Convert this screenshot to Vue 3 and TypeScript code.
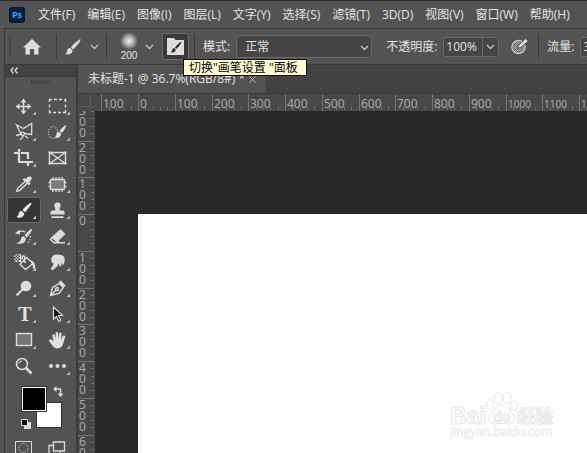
<script setup lang="ts">
import { computed, onBeforeUnmount, onMounted, ref } from 'vue'

const menus = ['文件(F)', '编辑(E)', '图像(I)', '图层(L)', '文字(Y)', '选择(S)', '滤镜(T)', '3D(D)', '视图(V)', '窗口(W)', '帮助(H)']

interface Tool { id: string; name: string; flyout: boolean }
const tools: Tool[] = [
  { id: 'move', name: '移动工具', flyout: true },
  { id: 'marquee', name: '矩形选框工具', flyout: true },
  { id: 'lasso', name: '多边形套索工具', flyout: true },
  { id: 'quick', name: '快速选择工具', flyout: true },
  { id: 'crop', name: '裁剪工具', flyout: true },
  { id: 'frame', name: '图框工具', flyout: false },
  { id: 'eyedropper', name: '吸管工具', flyout: true },
  { id: 'patch', name: '修补工具', flyout: true },
  { id: 'brush', name: '画笔工具', flyout: true },
  { id: 'stamp', name: '仿制图章工具', flyout: true },
  { id: 'history', name: '历史记录画笔工具', flyout: true },
  { id: 'eraser', name: '橡皮擦工具', flyout: true },
  { id: 'bucket', name: '油漆桶工具', flyout: true },
  { id: 'smudge', name: '涂抹工具', flyout: true },
  { id: 'dodge', name: '减淡工具', flyout: true },
  { id: 'pen', name: '钢笔工具', flyout: true },
  { id: 'type', name: '横排文字工具', flyout: true },
  { id: 'path', name: '路径选择工具', flyout: true },
  { id: 'rect', name: '矩形工具', flyout: true },
  { id: 'hand', name: '抓手工具', flyout: true },
  { id: 'zoom', name: '缩放工具', flyout: false },
  { id: 'more', name: '编辑工具栏', flyout: true },
]
const active = ref('brush')
const mode = ref('正常')
const opacity = ref('100%')
const flow = ref('35%')

// Ruler marks: one labelled tick per 100 document pixels at 36.7% zoom.
const STEP = 36.75
interface Mark { pos: number; label: string; minor: number[] }
function marks(zeroAt: number, from: number, length: number): Mark[] {
  const list: Mark[] = []
  for (let i = from; zeroAt + i * STEP < length; i++) {
    const start = zeroAt + i * STEP
    list.push({
      pos: Math.round(start),
      label: String(Math.abs(i * 100)),
      minor: [1, 2, 3, 4].map((k) => Math.round(start + (k * STEP) / 5)),
    })
  }
  return list
}
const size = ref({ w: window.innerWidth, h: window.innerHeight })
function measure() {
  size.value = { w: window.innerWidth, h: window.innerHeight }
}
onMounted(() => window.addEventListener('resize', measure))
onBeforeUnmount(() => window.removeEventListener('resize', measure))
const across = computed(() => marks(43, -1, size.value.w - 95))
const down = computed(() => marks(103, -3, size.value.h - 111))

// Digits of a vertical label that fall inside the ruler.
function digits(m: Mark) {
  return m.label
    .split('')
    .map((d, i) => ({ d, y: m.pos + 11 * (i + 1) }))
    .filter((g) => g.y > 0 && g.y - 9 < size.value.h - 111)
}
</script>

<template>
  <div class="app">
    <header class="menubar">
      <span class="logo">Ps</span>
      <nav class="menus">
        <button v-for="m in menus" :key="m" type="button">{{ m }}</button>
      </nav>
    </header>

    <div class="frame">
      <section class="options">
        <span class="grip"></span>
        <button type="button" class="home" aria-label="主页">
          <svg width="18" height="16" viewBox="0 0 18 16"><path d="M9 0 18 8.500H15.500V15.500H11V10H7V15.500H2.500V8.500H0Z" fill="#dcdcdc" /></svg>
        </button>
        <span class="sep"></span>
        <button type="button" class="preset" aria-label="画笔预设">
          <svg width="16" height="16" viewBox="0 0 16 16" fill="#dcdcdc"><path d="M15.500.3C14 .3 8.500 5 6 8.300L8.200 10.500C11 8 16 2 15.500.3ZM5.300 9C3.500 8.800 2.300 10 2.200 11.800 2.100 13.500 1.200 14.400.2 15 3 16 7.300 15.300 7.700 11.300Z" /></svg>
          <svg class="chev" width="9" height="6" viewBox="0 0 9 6"><path d="M1 1 4.500 4.500 8 1" /></svg>
        </button>
        <span class="sep"></span>
        <button type="button" class="tip" aria-label="画笔大小">
          <span class="tip-face"><span class="dot"></span><span class="tip-size">200</span></span>
          <svg class="chev" width="9" height="6" viewBox="0 0 9 6"><path d="M1 1 4.500 4.500 8 1" /></svg>
        </button>
        <span class="hint-anchor">
          <button type="button" class="panel-toggle" aria-label="切换画笔设置面板">
            <svg width="17" height="17" viewBox="0 0 17 17"><path d="M0 0H7L8.500 2H17V17H0Z" fill="#dedede" /><path d="M14.500 3.500C12.500 4.500 9.500 7.500 8 9.400L9.400 10.800C11.500 9 14.500 5.500 14.500 3.500ZM7.300 10C5.800 10 5.300 11 5.200 12.200 5 13.300 4.200 13.900 3.500 14.200 5.500 15 8.500 14.600 8.800 11.500Z" fill="#303030" /></svg>
          </button>
          <span class="tooltip" role="tooltip">切换"画笔设置 "面板</span>
        </span>
        <span class="sep"></span>
        <label class="lbl" for="mode">模式:</label>
        <span class="select">
          <select id="mode" v-model="mode"><option>正常</option><option>溶解</option></select>
          <svg class="chev" width="9" height="6" viewBox="0 0 9 6"><path d="M1 1 4.500 4.500 8 1" /></svg>
        </span>
        <label class="lbl opacity-lbl" for="opacity">不透明度:</label>
        <span class="field">
          <input id="opacity" v-model="opacity" type="text" />
          <button type="button" aria-label="不透明度滑块"><svg class="chev" width="9" height="6" viewBox="0 0 9 6"><path d="M1 1 4.500 4.500 8 1" /></svg></button>
        </span>
        <button type="button" class="pressure" aria-label="压力控制不透明度">
          <svg width="18" height="17" viewBox="0 0 18 17">
            <defs><pattern id="chk" width="2" height="2" patternUnits="userSpaceOnUse"><path d="M0 0h2v2H0z" fill="#6a6a6a" /><path d="M0 0h1v1H0zM1 1h1v1H1z" fill="#a8a8a8" /></pattern></defs>
            <circle cx="7.500" cy="9" r="6.700" fill="url(#chk)" stroke="#c4c4c4" stroke-width="1.200" />
            <path d="M6.500 10.500 8 6.800 14.500 .6 17.300 3 10.200 9.200Z" fill="#e2e2e2" stroke="#535353" stroke-width="1" />
          </svg>
        </button>
        <span class="sep"></span>
        <label class="lbl" for="flow">流量:</label>
        <span class="field">
          <input id="flow" v-model="flow" type="text" />
          <button type="button" aria-label="流量滑块"><svg class="chev" width="9" height="6" viewBox="0 0 9 6"><path d="M1 1 4.500 4.500 8 1" /></svg></button>
        </span>
      </section>

      <div class="workspace">
        <aside class="toolbox">
          <button type="button" class="collapse" aria-label="折叠面板">
            <svg width="8" height="7" viewBox="0 0 8 7"><path d="M3.500.5 1 3.500 3.500 6.500M7.500.5 5 3.500 7.500 6.500" fill="none" stroke="#dcdcdc" stroke-width="1.300" /></svg>
          </button>
          <div class="panel-grip"><span></span></div>
          <div class="tools">
            <button v-for="t in tools" :key="t.id" type="button" :class="['tool', { on: active === t.id }]" :aria-label="t.name" @click="active = t.id">
              <svg width="34" height="26" viewBox="0 0 34 26" fill="none" stroke="#dcdcdc" stroke-width="1.400">
                <g v-if="t.id === 'move'"><path d="M16.500 8V19M11 13.500H22" stroke-width="1.600" /><path d="M16.500 5.500 19.500 9.500H13.500ZM16.500 21.500 19.500 17.500H13.500ZM8.500 13.500 12.500 10.500V16.500ZM24.500 13.500 20.500 10.500V16.500Z" fill="#dcdcdc" stroke="none" /></g>
                <path v-else-if="t.id === 'marquee'" d="M8.500 9V6.500H11M13 6.500H16M18 6.500H21M23 6.500H24.500V9M24.500 11.500V14.500M24.500 17V19.500H22M20 19.500H17M15 19.500H12M10 19.500H8.500V17M8.500 14.500V11.500" />
                <g v-else-if="t.id === 'lasso'"><path d="M14 15 9.500 6 16.500 9.500 24.700 4.500V15.500L17 14.500M9 16.500 14.500 15M16 16.500C16 18.500 14 20 12.500 20.500M18 17 21 19" stroke-width="1.300" /><circle cx="15.800" cy="14.800" r="1.700" /></g>
                <g v-else-if="t.id === 'quick'"><ellipse cx="12" cy="13.500" rx="4.500" ry="6" stroke-dasharray="1 1.700" stroke-width="1.200" /><path d="M25 6C22.500 7 19.500 10.500 18.500 12L20.800 14C23 11.500 25.500 8 25 6ZM17.800 12.800C16 12.800 15.500 14 15.500 15.300 15.500 17 14.500 18 13.500 18.500 16.500 19.700 20.200 18.500 20.200 14.800Z" fill="#dcdcdc" stroke="none" /></g>
                <path v-else-if="t.id === 'crop'" d="M7 8H11M14 8H21V14M21 17.500V21M12 4V17H26" stroke-width="2.200" />
                <g v-else-if="t.id === 'frame'"><path d="M8.500 7.500H24.500V18.500H8.500ZM8.500 7.500 24.500 18.500M24.500 7.500 8.500 18.500" /><path d="M7.500 6.500h2v2h-2zM23.500 6.500h2v2h-2zM7.500 17.500h2v2h-2zM23.500 17.500h2v2h-2z" fill="#dcdcdc" stroke="none" /></g>
                <g v-else-if="t.id === 'eyedropper'"><path d="M18 10.500 10.500 17.500 9.800 20.300 12.500 19.600 20 12.500" /><path d="M15.500 8.500 17.500 7 18.800 8.300C19.500 6.500 21.500 5 23.500 5.500 25.500 6 25 9 22.300 11L23.500 12.500 21.800 14.200Z" fill="#dcdcdc" stroke="none" /></g>
                <g v-else-if="t.id === 'patch'"><rect x="9.500" y="8.500" width="14" height="10" rx="1" fill="#7b7b7b" /><path d="M12 6V9M15 6V9M18 6V9M21 6V9M12 18V21M15 18V21M18 18V21M21 18V21M7.500 11.500H10M7.500 15.500H10M23 11.500H25.500M23 15.500H25.500" stroke-width="1.300" /></g>
                <path v-else-if="t.id === 'brush'" d="M24.500 5.500C22 6.200 17.500 10.500 15.500 13L18 15.300C20.800 12.500 24.800 7.500 24.500 5.500ZM14.600 13.800C12.500 13.800 11.800 15.200 11.700 16.800 11.600 18.600 10.500 19.500 9.300 20 12.500 21.700 17.200 20.500 17.200 16.300Z" fill="#e8e8e8" stroke="none" />
                <path v-else-if="t.id === 'stamp'" d="M16.500 5.500C19.200 5.500 20.500 7.800 19.200 10 18.600 11.200 18.500 12.500 19 13.500H22Q23.500 13.500 23.500 15V17.500H9.500V15Q9.500 13.500 11 13.500H14C14.500 12.500 14.400 11.200 13.800 10 12.500 7.800 13.800 5.500 16.500 5.500ZM10.500 19.300H22.500V20.900H10.500Z" fill="#dcdcdc" stroke="none" />
                <g v-else-if="t.id === 'history'"><path d="M25 5.500C22.500 6.500 19 10.500 17.500 12.500L19.800 14.500C22.500 12 25.500 7.500 25 5.500ZM16.700 13.300C14.800 13.300 14.100 14.700 14 16 13.900 18 12.500 19.300 9 20.300 14 21.700 19 20 19 15.500ZM8 10.500 12.500 6.500 13 11.500Z" fill="#dcdcdc" stroke="none" /><path d="M11.500 8.800C14 7.800 16.500 8 18.300 9.200" /><path d="M23.500 13C23.500 16.500 22.500 19 20 20.500" stroke-dasharray="1.300 1.700" stroke-width="1.300" /></g>
                <g v-else-if="t.id === 'eraser'"><path d="M19.500 7 23.500 11 16 18.500 11 14.500Z" fill="#dcdcdc" stroke-linejoin="round" /><path d="M12.500 13.500 9.500 16.500 12.800 19.500H16L18 17.500M12.500 19.700H24" /></g>
                <g v-else-if="t.id === 'bucket'"><path d="M7 5h7v8H7z" fill="#dcdcdc" stroke="none" /><path d="M7 5h1.500v1.500H7zM10 5h1.500v1.500H10zM8.500 6.500h1.500v1.500H8.500zM11.500 6.500H13v1.500h-1.500zM7 8h1.500v1.500H7zM10 8h1.500v1.500H10zM8.500 9.500h1.500V11H8.500zM11.500 9.500H13V11h-1.500zM7 11h1.500v1.500H7zM10 11h1.500v1.500H10z" fill="#333" stroke="none" /><path d="M19.500 8.500 26 14.500 18.500 20.500 13 15.200ZM17.500 13.500V8Q17.500 6.500 16 7T15 10.500" /><circle cx="18" cy="13" r="1" fill="#dcdcdc" stroke="none" /><path d="M23.500 11.500C27 12 28.500 15 28 19.500 26.800 20.500 25.500 19.500 25.800 17Z" fill="#dcdcdc" stroke="none" /></g>
                <path v-else-if="t.id === 'smudge'" d="M10.300 11C10 7.500 13 5.300 17 5.600L21 6.200C23.300 6.800 24 9 23.700 11.500L22.700 15.800 21.300 15.500 21 13 20 17.500 18.300 17.200 18 14.300 15.700 18 12 21C10.700 21.700 9.500 20.300 10.300 19L13 14.600C11.300 14.500 10.300 12.800 10.300 11Z" fill="#dcdcdc" stroke="none" />
                <g v-else-if="t.id === 'dodge'"><circle cx="19" cy="11" r="5.300" fill="#dcdcdc" stroke="none" /><path d="M16 14 9.500 20.500" stroke-width="1.900" /></g>
                <g v-else-if="t.id === 'pen'"><path d="M9.500 20.500 11.500 12.500 18.500 8.500 22.300 12.500 18 18.500ZM9.500 20.500 15 15" /><circle cx="16" cy="14" r="1.500" /><path d="M17.500 7 20 5.500 24.500 10.500 23 12.500Z" fill="#dcdcdc" stroke="none" /></g>
                <text v-else-if="t.id === 'type'" class="t-glyph" x="18" y="20" text-anchor="middle">T</text>
                <path v-else-if="t.id === 'path'" d="M12.500 6 21.500 14.500H17.500L19.800 19.500 17.800 20.500 15.500 15.500 12.500 18.300Z" fill="#151515" stroke-width="1.200" />
                <rect v-else-if="t.id === 'rect'" x="9.500" y="6.500" width="15" height="12" fill="#777" />
                <path v-else-if="t.id === 'hand'" d="M11.300 7.800Q12.800 6.300 13.900 8.300L14.700 12 14.600 5.800Q15.800 4.200 17 5.800L17.200 12 18.300 5.900Q19.700 4.700 20.600 6.300L20 12.500 21.900 8.700Q23.600 7.800 24.400 9.500L22.500 15.500C21.700 19.300 19.700 21.500 16.500 21.500 13.500 21.500 12.200 19.800 10.900 17.800L8.100 14.300Q7.800 12.100 9.900 12.200L12.500 14.200Z" fill="#e0e0e0" stroke="none" />
                <g v-else-if="t.id === 'zoom'"><circle cx="15" cy="11" r="5.500" stroke-width="1.500" /><path d="M12 10.500Q12.500 8 15 8" stroke-width="1" /><path d="M19 15 24.500 20.500" stroke-width="2.600" /></g>
                <g v-else fill="#dcdcdc" stroke="none"><circle cx="10" cy="13" r="2" /><circle cx="16.500" cy="13" r="2" /><circle cx="23" cy="13" r="2" /></g>
                <path v-if="t.flyout" d="M29 18.500V22H25.500Z" fill="#bdbdbd" stroke="none" />
              </svg>
            </button>
          </div>
          <div class="swatches">
            <button type="button" class="bg" aria-label="背景色"></button>
            <button type="button" class="fg" aria-label="前景色"></button>
            <button type="button" class="swap" aria-label="切换前景色和背景色">
              <svg width="11" height="11" viewBox="0 0 11 11"><path d="M2.500 3H7.500V8" fill="none" stroke="#dcdcdc" stroke-width="1.500" /><path d="M0 3 3.500 0V6ZM7.500 11 4.500 7.500H10.500Z" fill="#dcdcdc" /></svg>
            </button>
            <button type="button" class="reset" aria-label="默认前景色和背景色">
              <svg width="10" height="10" viewBox="0 0 10 10"><path d="M3 3H10V10H3Z" fill="#dcdcdc" /><path d="M.5.5H6.500V6.500H.5Z" fill="#111" stroke="#dcdcdc" /></svg>
            </button>
          </div>
          <div class="modes">
            <button type="button" aria-label="快速蒙版"><svg width="18" height="15" viewBox="0 0 18 15" fill="none" stroke="#dcdcdc"><path d="M.5.5H16.500V14H.5Z" /><circle cx="8.500" cy="7" r="4.500" stroke-dasharray="1 1.300" /></svg></button>
            <button type="button" aria-label="屏幕模式"><svg width="18" height="15" viewBox="0 0 18 15" fill="none" stroke="#dcdcdc" stroke-width="1.300"><path d="M5 4.500H1V14H12V11M5.500 1H16.500V10H5.500Z" /></svg></button>
          </div>
        </aside>

        <main class="document">
          <div class="tabs">
            <div class="tab">
              <span>未标题-1 @ 36.7%(RGB/8#) *</span>
              <button type="button" aria-label="关闭"><svg width="7" height="7" viewBox="0 0 7 7"><path d="M.5.5 6.500 6.500M6.500.5.5 6.500" stroke="#b5b5b5" /></svg></button>
            </div>
          </div>
          <div class="stage">
            <svg class="corner" width="17" height="17" viewBox="0 0 17 17"><path d="M0 12.500H17M12.500 0V17" stroke="#777" stroke-dasharray="1 1" /></svg>
            <svg class="ruler across">
              <g v-for="m in across" :key="m.pos">
                <rect :x="m.pos" y="0" width="1" height="17" />
                <rect v-for="n in m.minor" :key="n" :x="n" y="13" width="1" height="3" />
                <text :class="{ small: m.label.length > 3 }" :x="m.pos + 2" y="14">{{ m.label }}</text>
              </g>
            </svg>
            <svg class="ruler down">
              <g v-for="m in down" :key="m.pos">
                <rect x="0" :y="m.pos" width="16" height="1" />
                <rect v-for="n in m.minor" :key="n" x="13" :y="n" width="3" height="1" />
                <text v-for="g in digits(m)" :key="g.y" x="1" :y="g.y">{{ g.d }}</text>
              </g>
            </svg>
            <div class="canvas">
              <div class="page">
                <svg class="mark" width="108" height="54" viewBox="0 0 108 54" fill="#fff" stroke="#e6e6e6">
                  <ellipse cx="41" cy="15" rx="3.500" ry="5" /><ellipse cx="49" cy="8" rx="4" ry="5.500" /><ellipse cx="58" cy="8" rx="4" ry="5.500" /><ellipse cx="65" cy="16" rx="3.800" ry="5" />
                  <path d="M53 15C60 15 60 21 64 24 68 28 65 35 59 34 55 33 51 33 47 34 41 35 38 28 42 24 46 21 46 15 53 15Z" />
                  <g class="mark-text"><text x="1" y="34" font-size="23">Bai</text><text x="44" y="32" font-size="14">du</text><text x="68" y="33" font-size="18">经验</text></g>
                  <text class="mark-url" x="1" y="46" font-size="12">jingyan.baidu.com</text>
                </svg>
              </div>
            </div>
          </div>
        </main>
      </div>
    </div>
  </div>
</template>

<style>
body {
  margin: 0;
  background: #282828;
}
</style>

<style scoped>
.app {
  display: flex;
  flex-direction: column;
  height: 100vh;
  overflow: hidden;
  background: #535353;
  color: #e4e4e4;
  font-family: "Open Sans", "Noto Sans CJK SC", sans-serif;
  font-size: 12px;
  line-height: 16px;
}
button, input, select {
  margin: 0;
  padding: 0;
  border: 0;
  background: none;
  color: inherit;
  font: inherit;
}
button {
  flex: none;
}
svg {
  display: block;
}
.chev path {
  fill: none;
  stroke: #c4c4c4;
  stroke-width: 1.3px;
}
.menubar {
  display: flex;
  align-items: center;
  flex: none;
  height: 27px;
  padding-left: 9px;
  border-top: 1px solid #2c2c2c;
}
.logo {
  width: 16px;
  height: 16px;
  border-radius: 3px;
  background: #001e36;
  color: #31a8ff;
  font-size: 9px;
  font-weight: 700;
  line-height: 15px;
  text-align: center;
}
.menus {
  display: flex;
  gap: 12px;
  margin-left: 13px;
  white-space: nowrap;
}
.frame {
  display: flex;
  flex: 1;
  flex-direction: column;
  min-height: 0;
  margin-left: 4px;
  border-top: 1px solid #383838;
  border-left: 1px solid #383838;
}
.options {
  display: flex;
  align-items: center;
  flex: none;
  height: 35px;
  border-bottom: 1px solid #383838;
  white-space: nowrap;
}
.options > * {
  flex: none;
}
.grip {
  width: 2px;
  height: 19px;
  margin-left: 4px;
  background: repeating-linear-gradient(#3c3c3c 0 1px, #535353 1px 2px);
}
.home {
  margin: 0 15px 0 12px;
}
.sep {
  width: 1px;
  height: 25px;
  background: #3d3d3d;
}
.preset {
  display: flex;
  align-items: center;
  gap: 9px;
  margin: 0 7px 0 8px;
}
.tip {
  display: flex;
  align-items: center;
  gap: 7px;
  margin: 0 8px 0 13px;
}
.tip-face {
  display: flex;
  flex-direction: column;
  align-items: center;
}
.dot {
  width: 18px;
  height: 18px;
  border-radius: 50%;
  background: radial-gradient(#eee 0, #bbb 30%, #535353 70%);
}
.tip-size {
  font-family: "Liberation Sans", sans-serif;
  font-size: 10px;
  line-height: 12px;
}
.hint-anchor {
  position: relative;
  margin-right: 5px;
}
.panel-toggle {
  display: grid;
  place-items: center;
  width: 27px;
  height: 27px;
  border: 1px solid #6c6c6c;
  border-radius: 3px;
  background: #3b3b3b;
}
.tooltip {
  position: absolute;
  z-index: 5;
  top: 26px;
  left: 21px;
  padding: 0 8px 0 5px;
  border: 1px solid #111;
  background: #ffffd2;
  color: #000;
  line-height: 15px;
}
.lbl {
  margin: 0 6px 0 8px;
}
.select {
  position: relative;
}
.select select {
  display: block;
  width: 136px;
  height: 23px;
  padding-left: 8px;
  border: 1px solid #696969;
  border-radius: 3px;
  background: #454545;
  appearance: none;
}
.select .chev {
  position: absolute;
  top: 10px;
  right: 3px;
  pointer-events: none;
}
.opacity-lbl {
  margin-left: 14px;
}
.field {
  display: flex;
  height: 18px;
  border: 1px solid #696969;
  border-radius: 3px;
  background: #454545;
}
.field input {
  width: 36px;
  padding-left: 2px;
}
.field button {
  padding: 0 3px;
  border-left: 1px solid #696969;
}
.pressure {
  margin: 0 9px 0 12px;
}
.workspace {
  display: flex;
  flex: 1;
  min-height: 0;
}
.toolbox {
  flex: none;
  width: 71px;
  overflow: hidden;
  border-right: 2px solid #3a3a3a;
}
.collapse {
  display: block;
  width: 100%;
  height: 12px;
  padding-left: 5px;
  border-bottom: 1px solid #383838;
  background: #424242;
}
.panel-grip {
  display: flex;
  justify-content: center;
  padding: 3px 0 9px;
}
.panel-grip span {
  width: 20px;
  height: 4px;
  background: repeating-linear-gradient(90deg, #404040 0 1px, #535353 1px 2px);
}
.tools {
  display: grid;
  grid-template-columns: 34px 34px;
  padding-left: 2px;
}
.tool {
  height: 26px;
}
.tool.on {
  border-radius: 3px;
  background: #363636;
  box-shadow: inset 0 0 0 1px #686868;
}
.t-glyph {
  fill: #e2e2e2;
  stroke: none;
  font: bold 20px "Liberation Serif", serif;
}
.swatches {
  position: relative;
  height: 50px;
  margin: 5px 10px 0 16px;
}
.swatches button {
  position: absolute;
}
.fg, .bg {
  box-sizing: border-box;
  width: 26px;
  height: 26px;
  border: 1px solid #333;
}
.swatches .fg {
  top: 2px;
  left: 0;
  background: #000;
  box-shadow: inset 0 0 0 1px #fff;
}
.swatches .bg {
  top: 18px;
  left: 15px;
  background: #fff;
}
.swatches .swap {
  top: 2px;
  left: 32px;
}
.swatches .reset {
  top: 35px;
  left: 0;
}
.modes {
  display: flex;
  gap: 15px;
  margin-top: 7px;
  padding-left: 10px;
}
.document {
  display: flex;
  flex: 1;
  flex-direction: column;
  min-width: 0;
}
.tabs {
  display: flex;
  flex: none;
  height: 28px;
  border-bottom: 1px solid #383838;
  background: #424242;
}
.tab {
  display: flex;
  align-items: center;
  gap: 4px;
  padding: 0 10px;
  background: #535353;
  white-space: nowrap;
}
.stage {
  display: grid;
  flex: 1;
  grid-template-columns: 17px minmax(0, 1fr);
  grid-template-rows: 17px minmax(0, 1fr);
  min-height: 0;
}
.corner, .ruler {
  background: #484848;
}
.ruler {
  width: 100%;
  height: 100%;
  overflow: hidden;
  fill: #737373;
}
.ruler text {
  fill: #a9a9a9;
  font: 12px "Noto Sans", sans-serif;
}
.ruler text.small {
  font-size: 10px;
}
.canvas {
  display: flex;
  padding: 103px 0 0 43px;
  background: #282828;
}
.page {
  display: flex;
  flex: 1;
  align-items: flex-end;
  justify-content: flex-end;
  padding: 0 30px 9px 0;
  background: #fff;
}
.mark-text {
  font-family: "Liberation Sans", "Noto Sans CJK SC", sans-serif;
  font-weight: 700;
}
.mark-url {
  fill: #f5f5f5;
  stroke: #efefef;
  font-family: "Open Sans", sans-serif;
}
</style>
